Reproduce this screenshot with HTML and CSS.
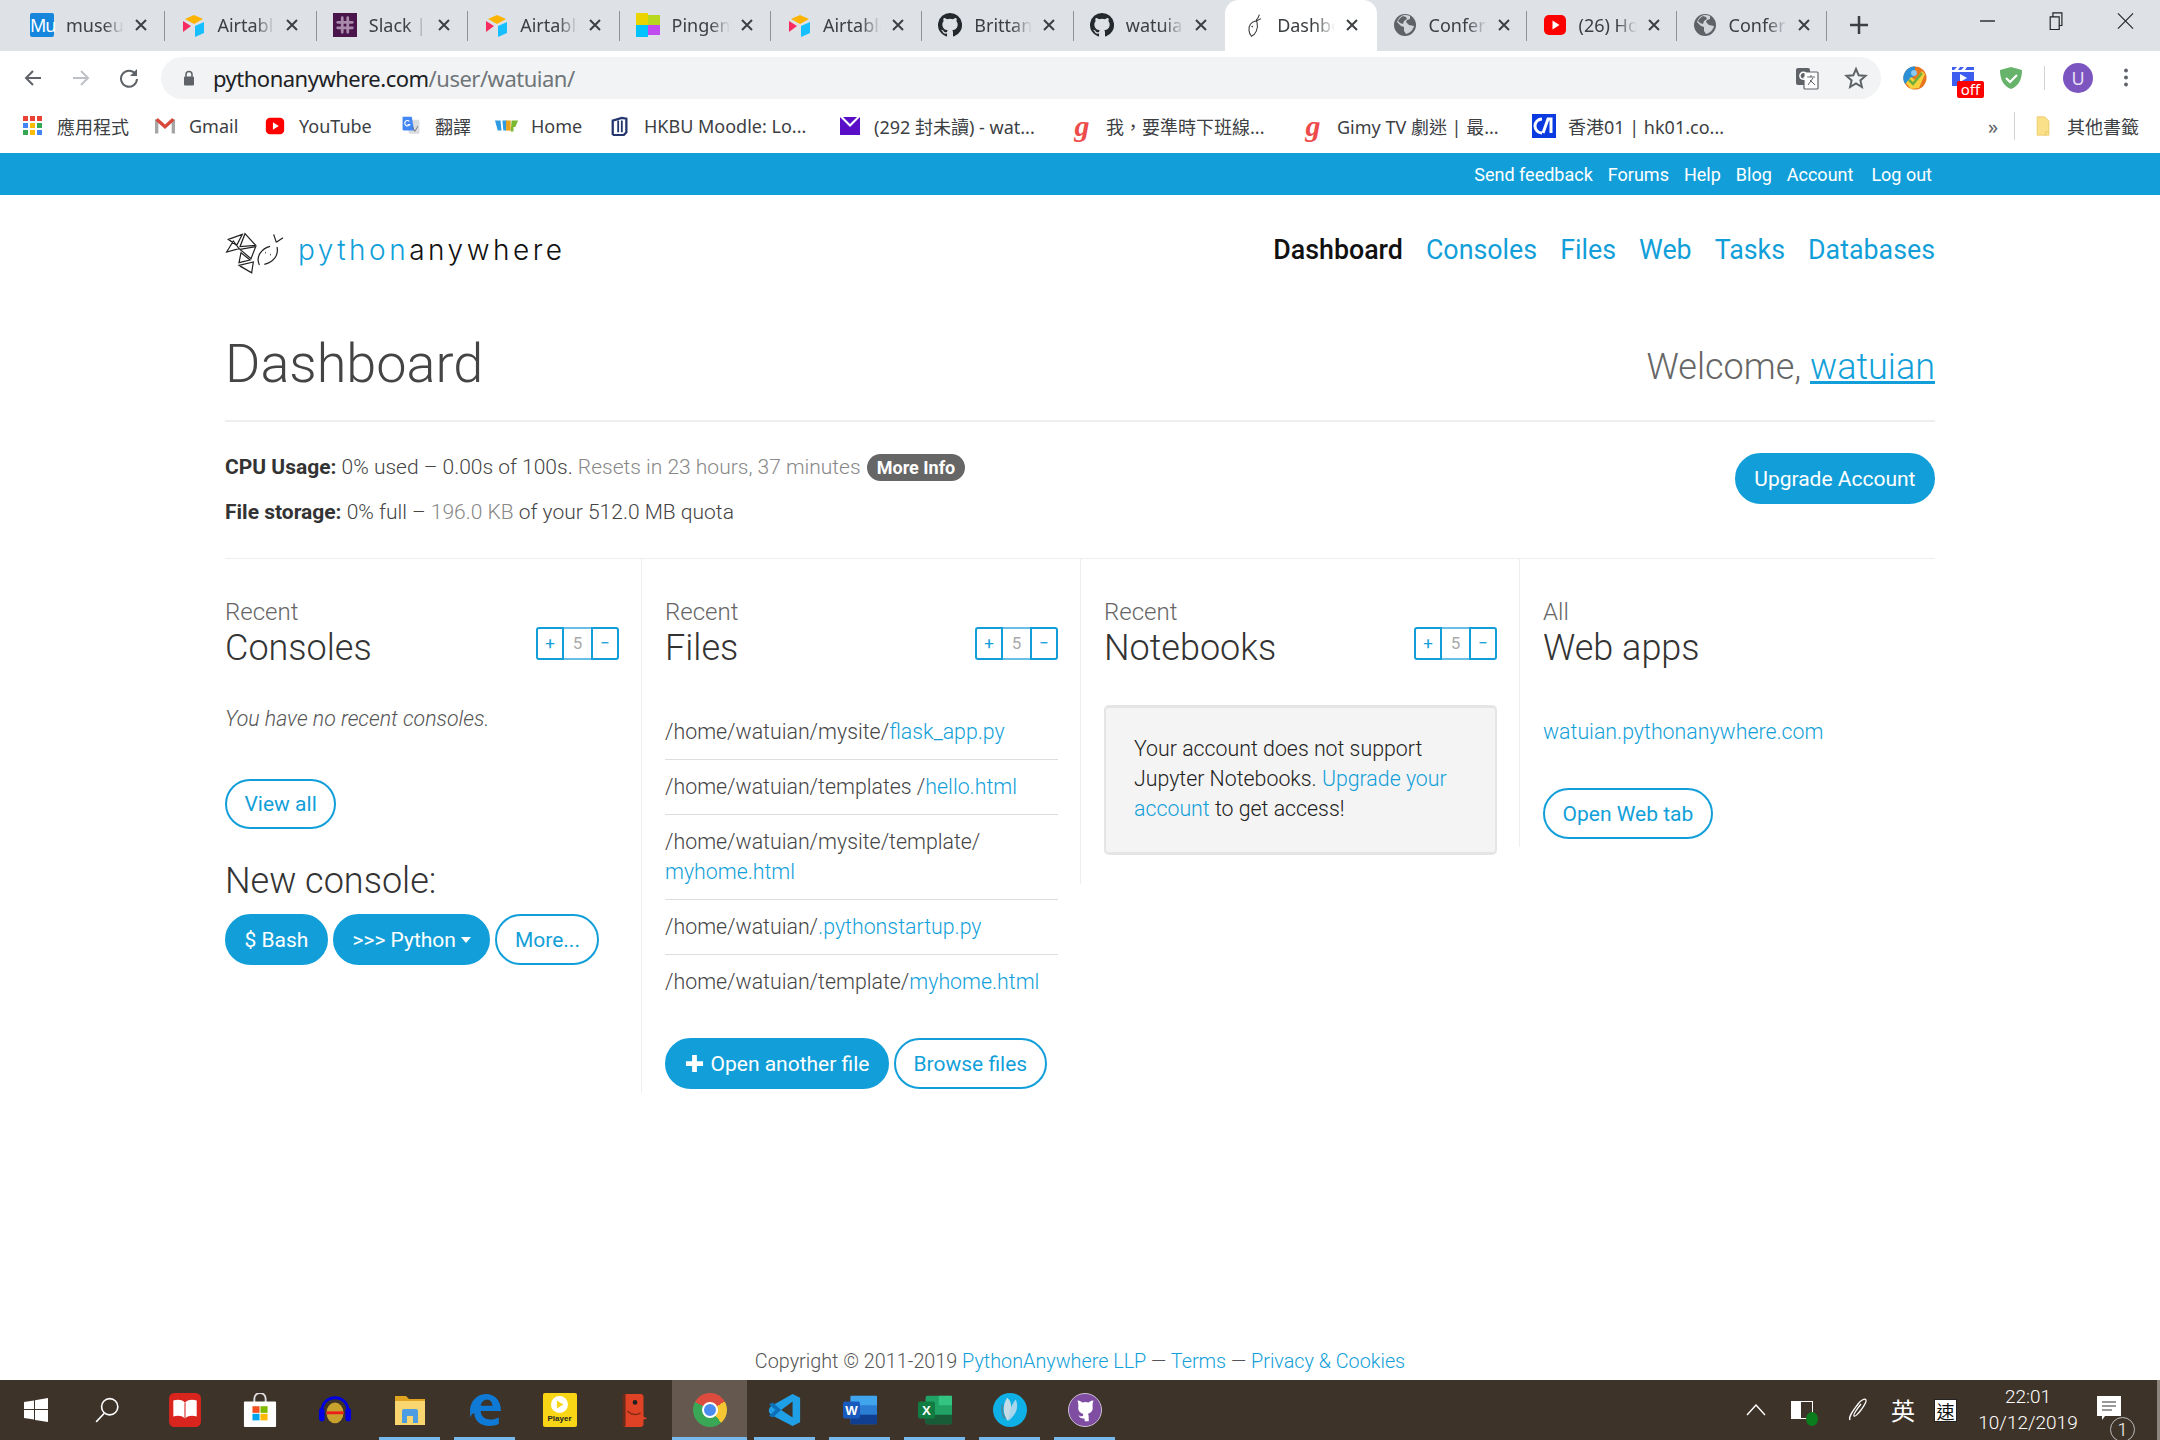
FILE: index.html
```
<!DOCTYPE html>
<html lang="en">
<head>
<meta charset="utf-8">
<title>Dashboard</title>
<link rel="stylesheet" href="styles.css">
</head>
<body>
<svg class="sprite" aria-hidden="true">
  <symbol id="airtable" viewBox="0 0 24 24"><path d="M13 2 22 6l-9 5-9-5z" fill="#fcb400"/><path d="M14 13l9-4v11l-9 4z" fill="#18bfff"/><path d="M2 8l8 5-8 6z" fill="#f82b60"/></symbol>
  <symbol id="github" viewBox="0 0 16 16"><path fill="#24292e" d="M8 0a8 8 0 0 0-2.53 15.59c.4.07.55-.17.55-.38v-1.49c-2.22.48-2.69-.94-2.69-.94-.36-.93-.89-1.17-.89-1.17-.73-.5.05-.49.05-.49.8.06 1.23.82 1.23.82.71 1.22 1.87.87 2.33.66.07-.52.28-.87.5-1.07-1.77-.2-3.64-.89-3.64-3.95 0-.87.31-1.59.82-2.15-.08-.2-.36-1.02.08-2.12 0 0 .67-.21 2.2.82a7.6 7.6 0 0 1 4 0c1.53-1.04 2.2-.82 2.2-.82.44 1.1.16 1.92.08 2.12.51.56.82 1.27.82 2.15 0 3.07-1.87 3.75-3.65 3.95.29.25.54.73.54 1.48v2.2c0 .21.15.46.55.38A8 8 0 0 0 8 0z"/></symbol>
  <symbol id="globe" viewBox="0 0 24 24"><circle cx="12" cy="12" r="11" fill="#5f6368"/><path fill="#dee1e6" d="M11 2C7 3 5 6 4 9l4 4 3 1v4l2 3c4-1 7-4 8-8l-5-1-3-3 1-2 3-1V3c-2-1-4-1-6-1z" opacity=".9"/><path fill="#5f6368" d="M10 3l3 1 1 2-3 2-1 3-3-1-2-2c1-2 3-4 5-5z"/></symbol>
  <symbol id="youtube" viewBox="0 0 24 24"><rect x="1" y="2" width="22" height="20" rx="5" fill="#f00"/><path d="M9.500 7.500v9l7-4.500z" fill="#fff"/></symbol>
  <symbol id="pa-mark" viewBox="0 0 24 30"><g fill="none" stroke="#333" stroke-width="1.300"><path d="M20 2c-1 3-2 5-4 7M22 7l-6 3M15 10c-5 1-9 6-8 12s3 6 3 7c5-2 9-9 7-18z"/></g><circle cx="11" cy="17" r="1" fill="#333"/></symbol>
  <symbol id="x" viewBox="0 0 14 14"><path d="M2 2l10 10M12 2 2 12" stroke="#3c4043" stroke-width="2" fill="none"/></symbol>
</svg>

<div class="page">
  <header class="tabstrip">
    <div class="tab"><span class="fav fav-mu">Mu</span><span class="tab-title">museum</span><svg class="tab-x"><use href="#x"/></svg></div>
    <div class="tab"><svg class="fav"><use href="#airtable"/></svg><span class="tab-title">Airtable</span><svg class="tab-x"><use href="#x"/></svg></div>
    <div class="tab"><span class="fav fav-slack"><svg viewBox="0 0 24 24"><path d="M9 4v16M15 4v16M4 9h16M4 15h16" stroke="#a88bab" stroke-width="3" stroke-linecap="round" fill="none"/></svg></span><span class="tab-title">Slack | w</span><svg class="tab-x"><use href="#x"/></svg></div>
    <div class="tab"><svg class="fav"><use href="#airtable"/></svg><span class="tab-title">Airtable</span><svg class="tab-x"><use href="#x"/></svg></div>
    <div class="tab"><svg class="fav" viewBox="0 0 24 24"><path d="M0 0h12v12H0z" fill="#ecd400"/><path d="M12 2h12v10H12z" fill="#b7d81e"/><path d="M0 12h12v12H0z" fill="#00c2ff"/><path d="M12 12h12v10H12z" fill="#c04cf0"/></svg><span class="tab-title">Pingen</span><svg class="tab-x"><use href="#x"/></svg></div>
    <div class="tab"><svg class="fav"><use href="#airtable"/></svg><span class="tab-title">Airtable</span><svg class="tab-x"><use href="#x"/></svg></div>
    <div class="tab"><svg class="fav"><use href="#github"/></svg><span class="tab-title">Brittany</span><svg class="tab-x"><use href="#x"/></svg></div>
    <div class="tab tab-before-active"><svg class="fav"><use href="#github"/></svg><span class="tab-title">watuian</span><svg class="tab-x"><use href="#x"/></svg></div>
    <div class="tab tab-active"><svg class="fav"><use href="#pa-mark"/></svg><span class="tab-title">Dashboard</span><svg class="tab-x"><use href="#x"/></svg></div>
    <div class="tab tab-after"><svg class="fav"><use href="#globe"/></svg><span class="tab-title">Conference</span><svg class="tab-x"><use href="#x"/></svg></div>
    <div class="tab tab-after"><svg class="fav"><use href="#youtube"/></svg><span class="tab-title">(26) Home</span><svg class="tab-x"><use href="#x"/></svg></div>
    <div class="tab tab-after"><svg class="fav"><use href="#globe"/></svg><span class="tab-title">Conference</span><svg class="tab-x"><use href="#x"/></svg></div>
    <svg class="newtab" viewBox="0 0 20 20"><path d="M10 1v18M1 10h18" stroke="#3c4043" stroke-width="2.500"/></svg>
    <div class="winctl">
      <svg viewBox="0 0 16 16"><path d="M1 8h14" stroke="#222" stroke-width="1.300"/></svg>
      <svg viewBox="0 0 16 20"><path d="M1 5.500h10v14H1zM4 5V1h10v14h-3" stroke="#222" stroke-width="1.300" fill="none"/></svg>
      <svg viewBox="0 0 18 18"><path d="M1 1l16 16M17 1 1 17" stroke="#222" stroke-width="1.200"/></svg>
    </div>
  </header>

  <div class="toolbar">
    <svg class="nav-ic" viewBox="0 0 20 20"><path d="M18 10H3M10 3l-7 7 7 7" stroke="#5f6368" stroke-width="2" fill="none"/></svg>
    <svg class="nav-ic" viewBox="0 0 20 20"><path d="M2 10h15M10 3l7 7-7 7" stroke="#bdc1c6" stroke-width="2" fill="none"/></svg>
    <svg class="nav-ic" viewBox="0 0 20 20"><path d="M16.500 6A8 8 0 1 0 18 11" stroke="#5f6368" stroke-width="2" fill="none"/><path d="M18 1v7h-7z" fill="#5f6368"/></svg>
    <div class="omnibox">
      <svg class="lock" viewBox="0 0 12 16"><path d="M3 7V4.500a3 3 0 0 1 6 0V7" stroke="#5f6368" stroke-width="1.500" fill="none"/><rect x="1" y="6.500" width="10" height="9" rx="1" fill="#5f6368"/></svg>
      <span class="url"><span class="url-host">pythonanywhere.com</span>/user/watuian/</span>
      <svg class="omni-ic" viewBox="0 0 24 24"><rect x="1" y="2" width="14" height="17" rx="2" fill="#5f6368"/><rect x="9" y="6" width="14" height="17" rx="1" fill="#fff" stroke="#5f6368" stroke-width="1.200"/><path d="M12 11h8M16 9v2M13 19l5-7M15 14l5 5" stroke="#5f6368" stroke-width="1" fill="none"/><path d="M11 7.500a3.500 3.500 0 1 0 .5 4H8.500" stroke="#fff" stroke-width="1.500" fill="none"/></svg>
      <svg class="omni-ic" viewBox="0 0 24 24"><path d="M12 3l2.700 6.300 6.800.6-5.100 4.500 1.500 6.600-5.900-3.500-5.900 3.500 1.500-6.600L2.500 9.900l6.800-.6z" stroke="#5f6368" stroke-width="2" fill="none"/></svg>
    </div>
    <div class="ext-row">
      <svg class="ext" viewBox="0 0 24 24"><circle cx="12" cy="12" r="11.500" fill="#e8741e"/><path d="M12 .5A11.500 11.500 0 0 0 2 18l10-9z" fill="#2a8fd4"/><path d="M3 17l5 6 8-1 6-14-3-3-7 9-4-3z" fill="#f4d13d"/><circle cx="11" cy="7" r="3" fill="#8cc8f0"/><path d="M6 14l4 4 9-11" stroke="#6fae3a" stroke-width="2.500" fill="none"/></svg>
      <span class="ext ext-off">
        <svg viewBox="0 0 24 24"><path d="M1 1h5l-3 3H1zM9 1h4l-3 3H7zM16 1h7v3h-9z" fill="#3e5ef0"/><path d="M1 6h22v14H1z" fill="#3e5ef0"/><path d="M9 8l7 4-7 4z" fill="#fff"/></svg>
        <span class="off-badge">off</span>
      </span>
      <svg class="ext" viewBox="0 0 24 24"><path d="M12 1l11 3c0 9-3 16-11 19C4 20 1 13 1 4z" fill="#68b36b"/><path d="M7 12l4 4 7-7" stroke="#fff" stroke-width="2.200" fill="none"/></svg>
      <i class="ext-sep"></i>
      <span class="avatar">U</span>
      <svg class="kebab" viewBox="0 0 6 24"><circle cx="3" cy="4" r="2.200" fill="#5f6368"/><circle cx="3" cy="12" r="2.200" fill="#5f6368"/><circle cx="3" cy="20" r="2.200" fill="#5f6368"/></svg>
    </div>
  </div>

  <nav class="bookmarks">
    <a class="bm"><svg class="bm-ic" viewBox="0 0 20 20"><g><path d="M0 0h5v5H0z" fill="#ea4335"/><path d="M7 0h5v5H7z" fill="#ea4335"/><path d="M14 0h5v5h-5z" fill="#ea4335"/><path d="M0 7h5v5H0z" fill="#4285f4"/><path d="M7 7h5v5H7z" fill="#fbbc05"/><path d="M14 7h5v5h-5z" fill="#34a853"/><path d="M0 14h5v5H0z" fill="#34a853"/><path d="M7 14h5v5H7z" fill="#fbbc05"/><path d="M14 14h5v5h-5z" fill="#4285f4"/></g></svg>應用程式</a>
    <a class="bm"><svg class="bm-ic" viewBox="0 0 24 20"><path d="M2 2v17M22 2v17" stroke="#a6a6a6" stroke-width="4"/><path d="M2 2l10 9 10-9" stroke="#d8493c" stroke-width="4" fill="none"/></svg>Gmail</a>
    <a class="bm"><svg class="bm-ic"><use href="#youtube"/></svg>YouTube</a>
    <a class="bm"><svg class="bm-ic bm-ic-wide" viewBox="0 0 24 26"><rect x="9" y="5" width="14" height="18" rx="1" fill="#dadce0"/><path d="M1 1h12l3 18H3a2 2 0 0 1-2-2z" fill="#4285f4"/><path d="M10 7a3.500 3.500 0 1 0 .5 4H7.500" stroke="#fff" stroke-width="1.500" fill="none"/><path d="M14 14l3 6 4-7" stroke="#666" fill="none"/></svg>翻譯</a>
    <a class="bm"><svg class="bm-ic bm-ic-wide" viewBox="0 0 26 20"><path d="M0 4h6l1 11H3zM8 4h5l-1 11H9z" fill="#2f9be0"/><path d="M12 4h5v11h-5z" fill="#e8a21c"/><path d="M18 4h7l-3 7h-2v5h-3z" fill="#7cb82f"/></svg>Home</a>
    <a class="bm"><svg class="bm-ic" viewBox="0 0 20 22"><path d="M2 21V5l10-3 5 1v15l-3 3H2" fill="none" stroke="#24366f" stroke-width="2.500"/><path d="M8 5v13M12 5v13" stroke="#24366f" stroke-width="2"/></svg>HKBU Moodle: Lo...</a>
    <a class="bm"><svg class="bm-ic" viewBox="0 0 20 20"><rect y="1" width="20" height="18" fill="#5b0ec7"/><path d="M0 1h20L10 11z" fill="#fff"/><path d="M3 1h14l-7 7z" fill="#5b0ec7"/></svg>(292 封未讀) - wat...</a>
    <a class="bm"><span class="bm-ic gimy">g</span>我，要準時下班線...</a>
    <a class="bm"><span class="bm-ic gimy">g</span>Gimy TV 劇迷 | 最...</a>
    <a class="bm"><span class="bm-ic hk01"><svg viewBox="0 0 24 24"><path d="M10 5a7 7 0 1 0 0 14" stroke="#fff" stroke-width="3" fill="none"/><path d="M11 19 16 5h3v14" stroke="#fff" stroke-width="3" fill="none"/></svg></span>香港01 | hk01.co...</a>
    <span class="bm-more">»</span>
    <i class="bm-sep"></i>
    <a class="bm"><svg class="bm-ic" viewBox="0 0 16 24"><path d="M1 1h9l5 5v17H1z" fill="#fbe08a" stroke="#e8c860"/><path d="M11 23v-4h4" fill="none" stroke="#e8c860"/></svg>其他書籤</a>
  </nav>

  <div class="topbar">
    <a>Send feedback</a><a>Forums</a><a>Help</a><a>Blog</a><a>Account</a><a>Log out</a>
  </div>

  <main class="content">
    <div class="site-head">
      <a class="logo">
        <svg class="logo-mark" viewBox="80 70 180 135"><g fill="none" stroke="#222" stroke-width="3.600"><path d="M90 95l42-15-17 33zM140 78l32 35-47 4zM85 133l20-33 17 23zM125 125l47-8-14 36zM128 135l27 22-33 8zM122 173l43-10-5 32zM124 175l38 22"/><path d="M183 172c-12-26 8-50 32-56M236 118c6 26-12 46-38 52M226 80l8 24M254 90l-20 14"/><path d="M200 135h2M215 141h2" stroke-width="5"/></g></svg>
        <span class="logo-text"><span class="logo-py">python</span>anywhere</span>
      </a>
      <nav class="main-nav">
        <a class="is-current">Dashboard</a><a>Consoles</a><a>Files</a><a>Web</a><a>Tasks</a><a>Databases</a>
      </nav>
    </div>

    <div class="title-row">
      <h1>Dashboard</h1>
      <p class="welcome">Welcome, <a>watuian</a></p>
    </div>

    <section class="stats">
      <div class="stats-text">
        <p><b>CPU Usage:</b> 0% used – 0.00s of 100s. <span class="muted">Resets in 23 hours, 37 minutes</span> <a class="badge">More Info</a></p>
        <p><b>File storage:</b> 0% full – <span class="muted">196.0 KB</span> of your 512.0 MB quota</p>
      </div>
      <a class="btn btn-fill btn-upgrade">Upgrade Account</a>
    </section>

    <div class="columns">
      <section class="col">
        <div class="col-head">
          <h2><small>Recent</small>Consoles</h2>
          <div class="stepper"><span>+</span><span class="num">5</span><span>−</span></div>
        </div>
        <p class="empty">You have no recent consoles.</p>
        <a class="btn btn-line btn-view">View all</a>
        <h3>New console:</h3>
        <div class="btn-row"><a class="btn btn-fill">$ Bash</a><a class="btn btn-fill">&gt;&gt;&gt; Python <i class="caret"></i></a><a class="btn btn-line">More...</a></div>
      </section>

      <section class="col">
        <div class="col-head">
          <h2><small>Recent</small>Files</h2>
          <div class="stepper"><span>+</span><span class="num">5</span><span>−</span></div>
        </div>
        <ul class="files">
          <li>/home/watuian/mysite/<a>flask_app.py</a></li>
          <li>/home/watuian/templates /<a>hello.html</a></li>
          <li>/home/watuian/mysite/template/<br><a>myhome.html</a></li>
          <li>/home/watuian/<a>.pythonstartup.py</a></li>
          <li>/home/watuian/template/<a>myhome.html</a></li>
        </ul>
        <div class="btn-row btn-row-files"><a class="btn btn-fill"><svg class="plus" viewBox="0 0 20 20"><path d="M10 1v18M1 10h18" stroke="#fff" stroke-width="5"/></svg>Open another file</a><a class="btn btn-line">Browse files</a></div>
      </section>

      <section class="col col-notebooks">
        <div class="col-head">
          <h2><small>Recent</small>Notebooks</h2>
          <div class="stepper"><span>+</span><span class="num">5</span><span>−</span></div>
        </div>
        <div class="well">Your account does not support Jupyter Notebooks. <a>Upgrade your account</a> to get access!</div>
      </section>

      <section class="col col-web">
        <div class="col-head">
          <h2><small>All</small>Web apps</h2>
        </div>
        <p class="webapp"><a>watuian.pythonanywhere.com</a></p>
        <a class="btn btn-line">Open Web tab</a>
      </section>
    </div>
  </main>

  <footer class="site-foot">Copyright © 2011-2019 <a>PythonAnywhere LLP</a> — <a>Terms</a> — <a>Privacy &amp; Cookies</a></footer>

  <div class="taskbar">
    <div class="tb-start"><svg viewBox="0 0 24 24"><path d="M0 4l10-1.500V11H0zM11 2.300 24 0v11H11zM0 12h10v9.500L0 20zM11 12h13v12l-13-2z" fill="#fff"/></svg></div>
    <div class="tb-search"><svg viewBox="0 0 24 24"><circle cx="14.500" cy="9" r="7.500" stroke="#fff" stroke-width="1.500" fill="none"/><path d="M9.500 15 2 23" stroke="#fff" stroke-width="1.500"/></svg></div>
    <div class="tb-app"><svg viewBox="0 0 32 32"><rect width="30" height="32" x="1" rx="5" fill="#d9251d"/><path d="M16 9c-3-3-7-3-11-2v15c4-1 8-1 11 2 3-3 7-3 11-2V7c-4-1-8-1-11 2z" fill="#fff"/><path d="M16 9v15" stroke="#d9251d"/></svg></div>
    <div class="tb-app"><svg viewBox="0 0 36 36"><path d="M12 10V6a6 6 0 0 1 12 0v4" stroke="#ddd" stroke-width="2" fill="none"/><rect x="1" y="9" width="34" height="27" rx="1" fill="#fff"/><path d="M10 14h7.500v7H10z" fill="#f25022"/><path d="M18.500 14H26v7h-7.500z" fill="#7fba00"/><path d="M10 22h7.500v7H10z" fill="#00a4ef"/><path d="M18.500 22H26v7h-7.500z" fill="#ffb900"/></svg></div>
    <div class="tb-app"><svg viewBox="0 0 36 36"><path d="M4 20C4 0 32 0 32 20" stroke="#0000e0" stroke-width="3" fill="none"/><rect x="1" y="16" width="6" height="14" rx="3" fill="#0000e0"/><rect x="29" y="16" width="6" height="14" rx="3" fill="#0000e0"/><ellipse cx="18" cy="21" rx="9" ry="11" fill="#c8a22c"/><path d="M9 21h18" stroke="#ec1c1c" stroke-width="3"/></svg></div>
    <div class="tb-app tb-open"><svg viewBox="0 0 34 34"><path d="M2 3h11l3 3h16v26H2z" fill="#e0a421"/><path d="M2 8h30v24H2z" fill="#fad671"/><path d="M9 30V18q0-2 2-2h12q2 0 2 2v12h-5v-7h-6v7z" fill="#4c9de2"/></svg></div>
    <div class="tb-app tb-open"><svg viewBox="0 0 32 32"><path d="M2 14C4 5 11 1 17 1c8 0 14 6 14 16H12c0 5 4 8 9 8 3 0 6-1 8-2v6c-3 2-6 2-9 2C12 31 6 26 6 19c-2 0-3 2-4 4z" fill="#0f7ad6"/><path d="M12 12h11c0-3-2-6-5-6s-6 3-6 6z" fill="#3e3329"/></svg></div>
    <div class="tb-app"><span class="player"><i><svg viewBox="0 0 10 10"><path d="M3 2l5 3-5 3z" fill="#f8d616"/></svg></i><b>Player</b></span></div>
    <div class="tb-app"><svg viewBox="0 0 26 36"><path d="M2 1h18l2 2v22l4 2-4 1v6l-2 2H2z" fill="#df4224"/><path d="M0 1h3v34H0z" fill="#6b2a1a"/><circle cx="13" cy="10" r="2.500" fill="#222"/><path d="M5 19c4 4 9 5 14 2" stroke="#8a2b18" fill="none" stroke-width="1.500"/></svg></div>
    <div class="tb-app tb-active tb-open"><span class="chrome"><i></i></span></div>
    <div class="tb-app tb-open"><svg viewBox="0 0 36 36"><path d="M26 1 34 5v26l-8 4L3 23l-2-3v-3l2-3z" fill="#1f9fe6"/><path d="M26 9v17L14 18z" fill="#3e3329"/><path d="M1 12l4-2 9 8-9 8-4-2 7-6z" fill="#0d6fb8"/></svg></div>
    <div class="tb-app tb-open"><svg viewBox="0 0 36 36"><rect x="8" y="3" width="28" height="30" rx="2" fill="#2b7cd3"/><path d="M8 3h28v10H8z" fill="#41a5ee"/><path d="M8 23h28v10H8z" fill="#103f91"/><rect y="9" width="18" height="18" rx="2" fill="#185abd"/><text x="9" y="23" class="tb-letter">W</text></svg></div>
    <div class="tb-app tb-open"><svg viewBox="0 0 36 36"><rect x="8" y="3" width="28" height="30" rx="2" fill="#21a366"/><path d="M22 3h14v10H22z" fill="#33c481"/><path d="M8 23h28v10H8z" fill="#185c37"/><rect y="9" width="18" height="18" rx="2" fill="#107c41"/><text x="9" y="23" class="tb-letter">X</text></svg></div>
    <div class="tb-app tb-open"><svg viewBox="0 0 36 36"><circle cx="18" cy="18" r="18" fill="#0fb0e6"/><path d="M15 5c6 4 5 14 1 25-6-7-6-18-1-25z" fill="#c4dce6"/><path d="M24 7c4 8 0 16-7 22 0-8 2-16 7-22z" fill="#a5d6ec"/><path d="M10 12c-1 6 0 12 3 15" stroke="#4a8aa0" stroke-width="2" fill="none"/></svg></div>
    <div class="tb-app tb-open"><svg viewBox="0 0 36 36"><circle cx="18" cy="18" r="17.500" fill="#7f4ea3" stroke="#cfc6d6"/><path d="M18 30c-1-3 0-3-2-3-2 0-4-1-5-4 2 2 3 2 5 1 0-1 0-1 0-2-3-1-6-3-5-8 0-2 0-3-1-6 3 0 5 2 5 2a13 13 0 0 1 7 0s2-2 5-2c-1 3-1 4-1 6 1 5-2 7-5 8 1 1 1 3 1 8z" fill="#fff"/></svg></div>
    <div class="tray">
      <svg class="tray-chev" viewBox="0 0 20 12"><path d="M1 11 10 1l9 10" stroke="#fff" stroke-width="1.400" fill="none"/></svg>
      <span class="tray-batt"><i></i></span>
      <svg class="tray-pen" viewBox="0 0 22 26"><path d="M3 23c-2-3 3-9 8-16 3-4 7-6 8-4s-3 7-5 10c-3 4-6 7-7 6s3-7 7-12" stroke="#fff" stroke-width="1.300" fill="none"/></svg>
      <span class="tray-ime">英</span>
      <span class="tray-su">速</span>
      <div class="clock"><span>22:01</span><span>10/12/2019</span></div>
      <span class="notif"><svg viewBox="0 0 24 24"><path d="M0 0h24v20H8l-3 4v-4H0z" fill="#fff"/><path d="M5 6h14M5 10h14M5 14h10" stroke="#333"/></svg><b>1</b></span>
    </div>
  </div>
</div>
</body>
</html>
```

FILE: styles.css
```
* { box-sizing: border-box; }
html, body { margin: 0; padding: 0; }
body { font-family: Roboto, "Noto Sans CJK TC", sans-serif; background: #fff; color: #555; }
a { color: #129fd9; text-decoration: none; }
p, h1, h2, h3, ul { margin: 0; padding: 0; }
.sprite { display: none; }
.page { width: 2160px; height: 1440px; display: flex; flex-direction: column; overflow: hidden; }

/* tabs */
.tabstrip { height: 51px; flex: none; background: #dee1e6; display: flex; padding-left: 14px; position: relative; font-family: "Noto Sans", "Noto Sans CJK TC", sans-serif; font-size: 18px; color: #3c4043; }
.tab { width: 151.4px; height: 51px; display: flex; align-items: center; padding: 0 0 2px 16px; position: relative; flex: none; }
.tab-after { width: 150px; }
.tab::after { content: ""; position: absolute; right: 0; top: 11px; height: 30px; width: 1px; background: #8f9296; }
.tab-before-active::after, .tab-active::after { display: none; }
.tab-active { background: #fff; border-radius: 14px 14px 0 0; }
.fav { width: 24px; height: 24px; flex: none; display: block; }
.fav-mu { background: #1586dc; color: #fff; font-size: 18px; line-height: 24px; text-align: center; border-radius: 2px; letter-spacing: -1px; }
.fav-slack { background: #4a154b; padding: 1px; }
.fav-slack svg { display: block; }
.tab-title { margin-left: 12px; width: 58px; overflow: hidden; white-space: nowrap; flex: none; -webkit-mask-image: linear-gradient(to right, #000 65%, transparent); mask-image: linear-gradient(to right, #000 65%, transparent); }
.tab-x { width: 14px; height: 14px; flex: none; margin-left: 10px; }
.newtab { width: 20px; height: 20px; margin: 15px 0 0 22px; flex: none; }
.winctl { margin-left: auto; display: flex; align-items: center; gap: 52px; padding: 0 26px 10px 0; }
.winctl svg { width: 17px; height: 18px; display: block; }

/* toolbar */
.toolbar { height: 53px; flex: none; display: flex; align-items: center; padding: 0 0 0 23px; background: #fff; }
.nav-ic { width: 20px; height: 20px; margin-right: 28px; flex: none; }
.omnibox { margin-left: -6px; width: 1720px; height: 42px; background: #f1f3f4; border-radius: 21px; display: flex; align-items: center; padding: 0 13px 0 22px; flex: none; }
.lock { width: 12px; height: 16px; flex: none; }
.url { margin-left: 18px; font-family: "Noto Sans", sans-serif; font-size: 22px; letter-spacing: -.5px; color: #70757a; flex: 1; }
.url-host { color: #202124; }
.omni-ic { width: 24px; height: 24px; margin-left: 25px; flex: none; }
.ext-row { display: flex; align-items: center; margin-left: 22px; }
.ext { width: 24px; height: 24px; display: block; flex: none; margin-right: 24px; }
.ext-off { position: relative; }
.ext-off svg { display: block; }
.off-badge { position: absolute; left: 6px; top: 15px; width: 27px; height: 17px; background: #f00; color: #fff; font: 15px/16px "Noto Sans", sans-serif; text-align: center; border-radius: 2px; }
.ext-sep { width: 1px; height: 24px; background: #d0d2d5; margin: 0 18px 0 -3px; }
.avatar { width: 30px; height: 30px; border-radius: 50%; background: #7d55c0; color: #e8e0f5; font: 18px/30px "Noto Sans", sans-serif; text-align: center; margin-right: 30px; flex: none; }
.kebab { width: 6px; height: 21px; flex: none; }

/* bookmarks */
.bookmarks { height: 49px; flex: none; padding: 0 0 5px 23px; display: grid; align-items: center; grid-template-columns: 132px 110px 134px 96px 115px 230px 232px 231px 229px 456px 26px 19px 1fr; font-family: "Noto Sans", "Noto Sans CJK TC", sans-serif; font-size: 18px; white-space: nowrap; }
.bm { display: flex; align-items: center; color: #3c4043; }
.bm-ic { width: 20px; height: 20px; margin-right: 14px; flex: none; display: block; }
.bm-ic-wide { width: 24px; margin-right: 12px; }
.gimy { color: #ee4b4b; font: italic bold 30px/20px "Liberation Serif", serif; text-align: center; }
.hk01 { width: 24px; height: 24px; background: #0b3be0; margin-right: 12px; }
.hk01 svg { display: block; }
.bm-more { color: #5f6368; font-size: 20px; }
.bm-sep { width: 1px; height: 28px; background: #d0d2d5; }

/* blue bar */
.topbar { height: 42px; flex: none; background: #129fd9; display: flex; justify-content: flex-end; align-items: center; gap: 15px; padding-right: 228px; font-size: 18px; }
.topbar a { color: #fff; }
.topbar a:last-child { margin-left: 3px; }

/* main */
.content { flex: 1; width: 1710px; margin: 0 auto; min-height: 0; }
.site-head { height: 110px; display: flex; justify-content: space-between; align-items: center; }
.logo { display: flex; align-items: center; gap: 13px; }
.logo-mark { width: 60px; height: 45px; display: block; margin-top: 6px; }
.logo-text { font-family: Inter, sans-serif; font-size: 28px; font-weight: 300; letter-spacing: 3.500px; color: #111; }
.logo-py { color: #129fd9; }
.main-nav { display: flex; gap: 23px; font-size: 26.8px; }
.is-current { color: #111; font-weight: 500; }
.title-row { height: 117px; display: flex; justify-content: space-between; align-items: center; border-bottom: 2px solid #eee; }
h1 { font-weight: 300; font-size: 54px; color: #444; padding-top: 2px; }
.welcome { font-weight: 300; font-size: 36px; color: #666; padding-top: 8px; }
.welcome a { text-decoration: underline; }
.stats { height: 137px; display: flex; justify-content: space-between; align-items: flex-start; border-bottom: 1px solid #eee; padding-top: 30px; }
.stats-text { font-size: 21px; font-weight: 300; color: #444; line-height: 30px; display: flex; flex-direction: column; gap: 15px; }
.stats-text b { font-weight: 700; color: #333; }
.muted { color: #888; }
.badge { display: inline-block; background: #666; color: #fff; font-weight: 700; font-size: 18px; line-height: 27px; height: 27px; padding: 0 10px; border-radius: 14px; vertical-align: 0; margin-left: 1px; }
.btn { display: inline-flex; align-items: center; justify-content: center; height: 51px; padding: 0 17.5px; border-radius: 26px; border: 2px solid #129fd9; font-size: 21px; white-space: nowrap; }
.btn-fill { background: #129fd9; color: #fff; font-weight: 400; }
.btn-line { background: #fff; color: #129fd9; }
.btn-upgrade { margin-top: 1px; }

.columns { display: grid; grid-template-columns: repeat(4, 439px); margin: 0 -23px; align-items: start; }
.col { padding: 28px 22px 4px 23px; border-left: 1px solid #eee; }
.col:first-child { border-left: 0; padding-left: 23px; }
.col-notebooks { padding-bottom: 29px; }
.col-web { padding-bottom: 8px; }
.col-head { display: flex; justify-content: space-between; align-items: flex-end; height: 81px; }
h2 { font-weight: 300; font-size: 36px; line-height: 40px; color: #333; }
h2 small { display: block; font-size: 24px; line-height: 26px; color: #666; font-weight: 300; margin-bottom: 3px; }
.stepper { display: flex; width: 83px; height: 33px; margin-bottom: 8px; font-size: 17px; color: #129fd9; }
.stepper span { width: 28px; border: 2px solid #129fd9; text-align: center; line-height: 28px; }
.stepper span:first-child { border-radius: 3px 0 0 3px; }
.stepper span:last-child { border-radius: 0 3px 3px 0; }
.stepper .num { width: 27px; color: #aaa; border-left: 0; border-right: 0; border-color: #68bfe6; }
.empty { font-style: italic; font-weight: 300; font-size: 21.33px; line-height: 30px; color: #555; margin-top: 36px; }
.btn-view { margin-top: 45px; height: 50px; }
h3 { font-weight: 300; font-size: 36px; line-height: 40px; color: #333; margin-top: 32px; }
.btn-row { display: flex; gap: 5px; margin-top: 13px; }
.caret { display: inline-block; width: 0; height: 0; margin-left: 5px; border-top: 6px solid #fff; border-left: 5px solid transparent; border-right: 5px solid transparent; }
.files { list-style: none; margin-top: 37px; font-size: 21.33px; font-weight: 300; line-height: 30px; color: #444; }
.files li { padding: 12px 0; border-bottom: 1px solid #ddd; }
.files li:last-child { border-bottom: 0; }
.btn-row-files { margin-top: 29px; gap: 5px; }
.plus { width: 19px; height: 19px; margin-right: 7px; }
.well { margin-top: 37px; background: #f4f4f4; border: 2px solid #e5e5e5; border-top-width: 3px; border-bottom-width: 3px; border-radius: 5px; padding: 26px 28px; height: 150px; font-size: 21.33px; font-weight: 300; line-height: 30px; color: #222; }
.webapp { margin-top: 49px; font-size: 21.33px; line-height: 30px; font-weight: 300; margin-bottom: 41px; }

/* footer */
.site-foot { flex: none; height: 36px; padding-top: 6px; text-align: center; font-size: 19.8px; font-weight: 300; color: #555; }

/* taskbar */
.taskbar { height: 60px; flex: none; background: #3e3329; display: flex; position: relative; border-right: 3px solid #8b857e; }
.tb-start { width: 72px; display: flex; align-items: center; justify-content: center; }
.tb-start svg { width: 24px; height: 24px; }
.tb-search { width: 75px; display: flex; align-items: center; justify-content: center; padding-right: 5px; }
.tb-search svg { width: 26px; height: 28px; }
.tb-app { width: 75px; display: flex; align-items: center; justify-content: center; position: relative; }
.tb-app > svg { width: 34px; height: 34px; display: block; }
.tb-open::after { content: ""; position: absolute; left: 7px; right: 7px; bottom: 0; height: 3px; background: #76b9ed; }
.tb-active { background: #65594f; }
.tb-active::after { left: 0; right: 0; }
.player { width: 34px; height: 34px; background: #f8d616; border-radius: 2px; display: flex; flex-direction: column; align-items: center; padding-top: 3px; }
.player i { width: 17px; height: 17px; border-radius: 50%; background: #fff; display: block; padding: 2px; }
.player svg { display: block; }
.player b { font: bold 8px/11px "Liberation Sans", sans-serif; color: #222; }
.chrome { width: 34px; height: 34px; border-radius: 50%; background: conic-gradient(from -62deg, #dd4b3e 0 122deg, #f5c632 122deg 200deg, #3aa757 200deg 360deg); display: flex; align-items: center; justify-content: center; }
.chrome i { display: block; width: 16px; height: 16px; border-radius: 50%; background: #4a8cf0; border: 2px solid #fff; }
.tb-letter { font: bold 14px "Liberation Sans", sans-serif; fill: #fff; text-anchor: middle; }
.tray { margin-left: auto; display: flex; align-items: center; color: #fff; padding-right: 22px; }
.tray-chev { width: 20px; height: 12px; margin-right: 25px; }
.tray-batt { width: 22px; height: 18px; border: 1px solid #fff; border-left-width: 10px; position: relative; margin-right: 34px; }
.tray-batt i { position: absolute; right: -6px; bottom: -8px; width: 12px; height: 14px; border-radius: 50%; background: #0b7d1d; }
.tray-pen { width: 22px; height: 26px; margin-right: 22px; }
.tray-ime { font-size: 24px; margin-right: 19px; font-family: "Noto Sans CJK TC", sans-serif; line-height: 1; }
.tray-su { width: 23px; height: 23px; background: #fff; color: #111; font: 18px/23px "Noto Sans CJK TC", sans-serif; text-align: center; border: 1px solid #222; margin-right: 21px; }
.clock { display: flex; flex-direction: column; align-items: center; font-size: 19px; line-height: 26px; font-weight: 300; width: 100px; margin-right: 19px; }
.notif { width: 38px; height: 40px; position: relative; margin-top: 12px; }
.notif svg { width: 24px; height: 24px; display: block; }
.notif b { position: absolute; right: 0; bottom: -6px; width: 25px; height: 25px; border: 1px solid #bbb; border-radius: 50%; background: #3e3329; font-weight: 300; font-size: 18px; line-height: 23px; text-align: center; }
```
